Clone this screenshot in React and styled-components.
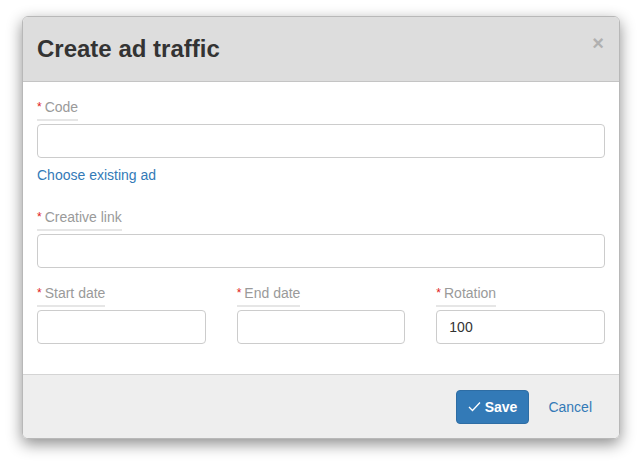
import React from "react"
import styled, { createGlobalStyle } from "styled-components"

const GlobalStyle = createGlobalStyle`
  html, body {
    margin: 0;
    padding: 0;
    background: #ffffff;
    font-family: "Liberation Sans", Arial, sans-serif;
  }
`

const Page = styled.div`
  width: 640px;
  height: 470px;
  padding: 16px 20px 0 22px;
  box-sizing: border-box;
`

const Modal = styled.div`
  width: 598px;
  height: 423px;
  border-radius: 6px;
  border: 1px solid #b8b8b8;
  box-sizing: border-box;
  overflow: hidden;
  display: flex;
  flex-direction: column;
  box-shadow: 0 5px 15px rgba(0, 0, 0, 0.45);
`

const Header = styled.div`
  height: 65px;
  box-sizing: border-box;
  background: #dddddd;
  border-bottom: 1px solid #c4c4c4;
  display: flex;
  align-items: flex-start;
  justify-content: space-between;
  padding: 17px 15px 0 14px;
`

const Title = styled.h4`
  margin: 0;
  font-size: 24px;
  font-weight: bold;
  color: #333;
  line-height: 30px;
`

const Close = styled.button`
  border: none;
  background: none;
  padding: 0;
  margin-top: 0;
  font-family: "Liberation Sans", Arial, sans-serif;
  font-size: 20px;
  font-weight: bold;
  color: #b0b0b0;
  line-height: 18px;
  cursor: pointer;
`

const Body = styled.div`
  flex: 1;
  background: #ffffff;
  padding: 15px 14px 0 14px;
  display: flex;
  flex-direction: column;
`

const Field = styled.div`
  display: flex;
  flex-direction: column;
  margin-top: ${(p) => p.$mt || 0}px;
  margin-bottom: ${(p) => p.$mb || 0}px;
`

const Label = styled.label`
  align-self: flex-start;
  font-size: 14px;
  color: #9a9a9a;
  line-height: 20px;
  padding-bottom: 2px;
  border-bottom: 2px solid #e6e6e6;
  margin-bottom: 3px;
`

const Star = styled.span`
  color: #e02020;
  font-size: 12px;
  margin-right: 3px;
  vertical-align: 1px;
`

const Input = styled.input`
  height: 34px;
  box-sizing: border-box;
  width: 100%;
  border: 1px solid #cccccc;
  border-radius: 4px;
  padding: 6px 12px;
  font-family: "Liberation Sans", Arial, sans-serif;
  font-size: 14px;
  color: #333;
  outline: none;
`

const Link = styled.a`
  align-self: flex-start;
  color: #337ab7;
  font-size: 14px;
  line-height: 20px;
  margin-top: 7px;
  text-decoration: none;
  cursor: pointer;
`

const Row = styled.div`
  display: grid;
  grid-template-columns: repeat(3, 1fr);
  column-gap: 31px;
`

const Footer = styled.div`
  height: 64px;
  box-sizing: border-box;
  background: #eeeeee;
  border-top: 1px solid #d4d4d4;
  display: flex;
  align-items: center;
  justify-content: flex-end;
  padding: 0 27px 0 15px;
  gap: 19px;
`

const SaveButton = styled.button`
  height: 34px;
  padding: 0 11px 0 11px;
  background: #337ab7;
  border: 1px solid #2e6da4;
  border-radius: 4px;
  color: #fff;
  font-family: "Liberation Sans", Arial, sans-serif;
  font-size: 14px;
  font-weight: bold;
  display: flex;
  align-items: center;
  gap: 4px;
  cursor: pointer;
`

const CancelLink = styled.a`
  color: #337ab7;
  font-size: 14px;
  cursor: pointer;
`

const Check = () => (
  <svg width="13" height="11" viewBox="0 0 13 11" fill="none">
    <path d="M1 6 L4.5 9.5 L12 1.5" stroke="#fff" strokeWidth="1.3" />
  </svg>
)

export default function App() {
  return (
    <Page>
      <GlobalStyle />
      <Modal>
        <Header>
          <Title>Create ad traffic</Title>
          <Close>×</Close>
        </Header>
        <Body>
          <Field>
            <Label><Star>*</Star>Code</Label>
            <Input />
          </Field>
          <Link>Choose existing ad</Link>
          <Field $mt={22} $mb={15}>
            <Label><Star>*</Star>Creative link</Label>
            <Input />
          </Field>
          <Row>
            <Field>
              <Label><Star>*</Star>Start date</Label>
              <Input />
            </Field>
            <Field>
              <Label><Star>*</Star>End date</Label>
              <Input />
            </Field>
            <Field>
              <Label><Star>*</Star>Rotation</Label>
              <Input defaultValue="100" />
            </Field>
          </Row>
        </Body>
        <Footer>
          <SaveButton><Check />Save</SaveButton>
          <CancelLink>Cancel</CancelLink>
        </Footer>
      </Modal>
    </Page>
  )
}
